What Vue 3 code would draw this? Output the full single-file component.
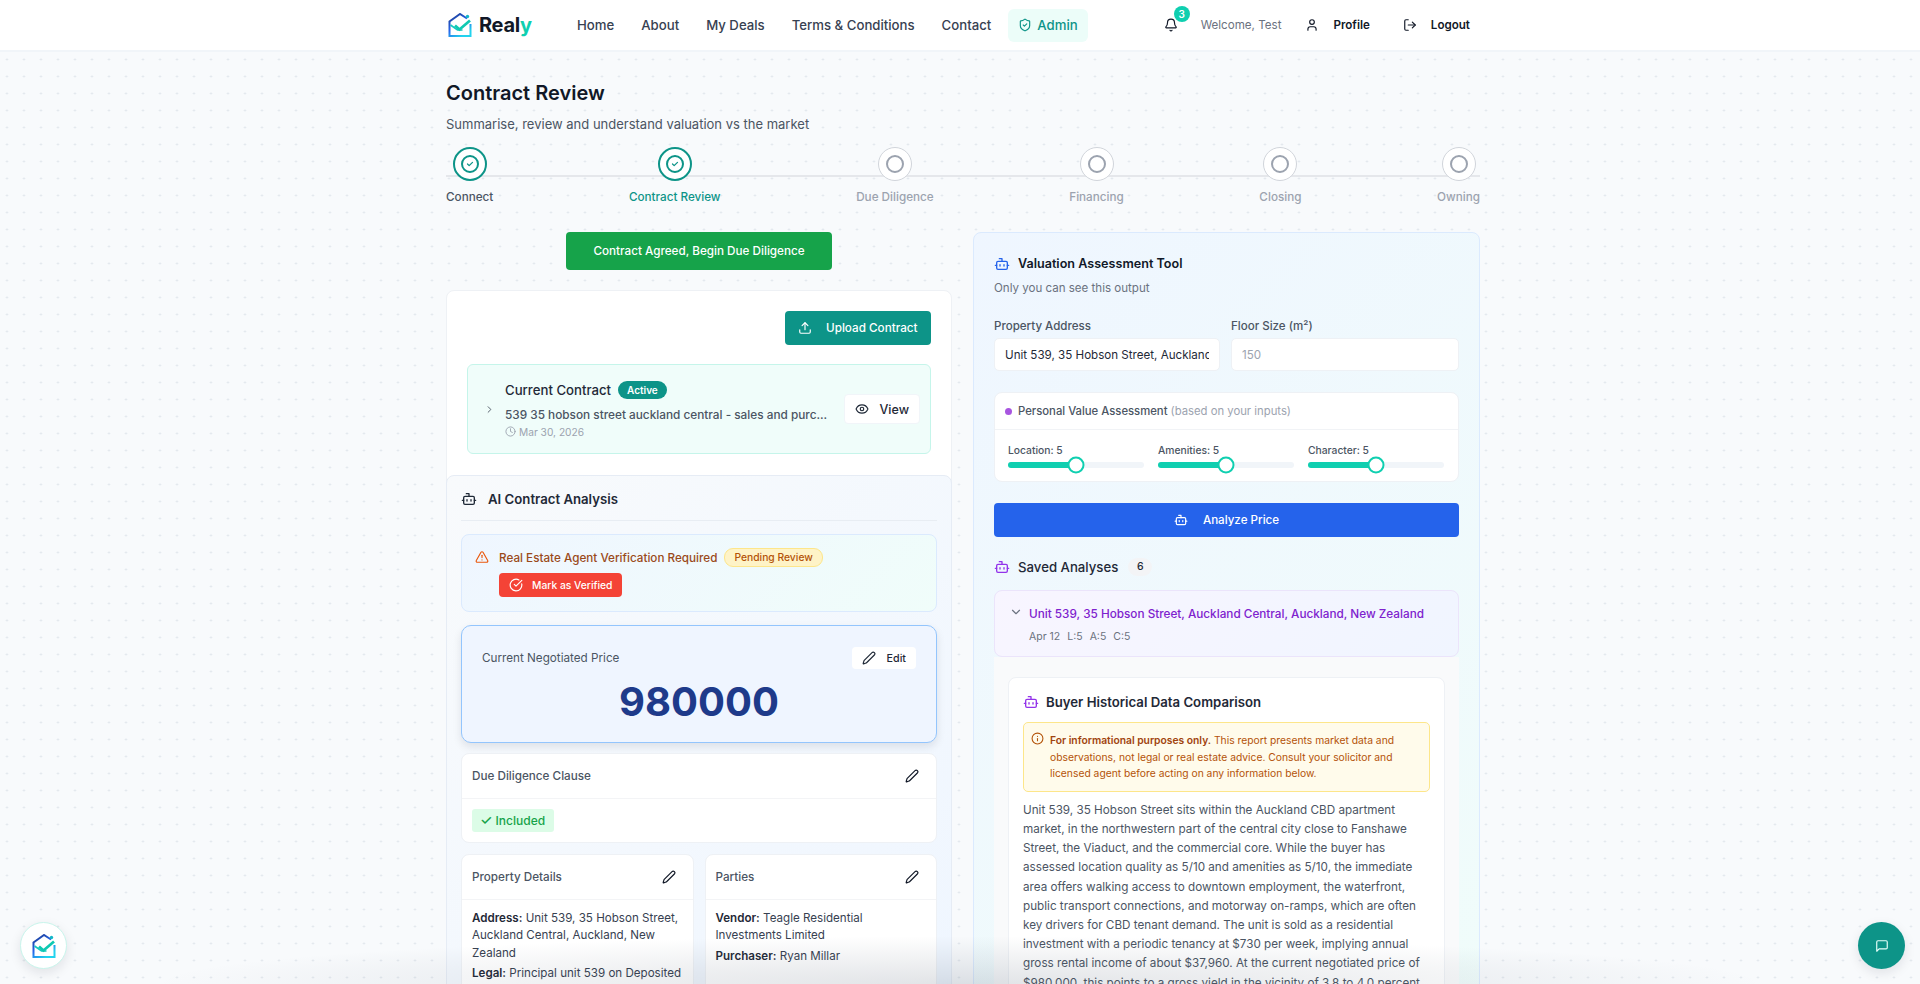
<script setup>
const icons = {
  bot: '<path d="M12 8V4H8"/><rect width="16" height="12" x="4" y="8" rx="2"/><path d="M2 14h2"/><path d="M20 14h2"/><path d="M15 13v2"/><path d="M9 13v2"/>',
  bell: '<path d="M10.268 21a2 2 0 0 0 3.464 0"/><path d="M3.262 15.326A1 1 0 0 0 4 17h16a1 1 0 0 0 .74-1.673C19.41 13.956 18 12.499 18 8A6 6 0 0 0 6 8c0 4.499-1.411 5.956-2.738 7.326"/>',
  user: '<path d="M19 21v-2a4 4 0 0 0-4-4H9a4 4 0 0 0-4 4v2"/><circle cx="12" cy="7" r="4"/>',
  logout: '<path d="M9 21H5a2 2 0 0 1-2-2V5a2 2 0 0 1 2-2h4"/><polyline points="16 17 21 12 16 7"/><line x1="21" x2="9" y1="12" y2="12"/>',
  upload: '<path d="M21 15v4a2 2 0 0 1-2 2H5a2 2 0 0 1-2-2v-4"/><polyline points="17 8 12 3 7 8"/><line x1="12" x2="12" y1="3" y2="15"/>',
  eye: '<path d="M2.062 12.348a1 1 0 0 1 0-.696 10.75 10.75 0 0 1 19.876 0 1 1 0 0 1 0 .696 10.75 10.75 0 0 1-19.876 0"/><circle cx="12" cy="12" r="3"/>',
  clock: '<circle cx="12" cy="12" r="10"/><polyline points="12 6 12 12 16 14"/>',
  right: '<path d="m9 18 6-6-6-6"/>',
  down: '<path d="m6 9 6 6 6-6"/>',
  alert: '<path d="m21.73 18-8-14a2 2 0 0 0-3.48 0l-8 14A2 2 0 0 0 4 21h16a2 2 0 0 0 1.73-3"/><path d="M12 9v4"/><path d="M12 17h.01"/>',
  check: '<path d="M21.801 10A10 10 0 1 1 17 3.335"/><path d="m9 11 3 3L22 4"/>',
  pen: '<path d="M21.174 6.812a1 1 0 0 0-3.986-3.987L3.842 16.174a2 2 0 0 0-.5.83l-1.321 4.352a.5.5 0 0 0 .623.622l4.353-1.32a2 2 0 0 0 .83-.497z"/>',
  shield: '<path d="M20 13c0 5-3.5 7.5-7.66 8.95a1 1 0 0 1-.67-.01C7.5 20.5 4 18 4 13V6a1 1 0 0 1 1-1c2 0 4.5-1.2 6.24-2.72a1.17 1.17 0 0 1 1.52 0C14.51 3.81 17 5 19 5a1 1 0 0 1 1 1z"/><path d="m9 12 2 2 4-4"/>',
  info: '<circle cx="12" cy="12" r="10"/><path d="M12 16v-4"/><path d="M12 8h.01"/>',
  message: '<path d="M21 15a2 2 0 0 1-2 2H7l-4 4V5a2 2 0 0 1 2-2h14a2 2 0 0 1 2 2z"/>',
}

const navLinks = ['Home', 'About', 'My Deals', 'Terms & Conditions', 'Contact']

const steps = [
  { label: 'Connect', state: 'done' },
  { label: 'Contract Review', state: 'now' },
  { label: 'Due Diligence', state: 'todo' },
  { label: 'Financing', state: 'todo' },
  { label: 'Closing', state: 'todo' },
  { label: 'Owning', state: 'todo' },
]

const sliders = [
  { label: 'Location', value: 5 },
  { label: 'Amenities', value: 5 },
  { label: 'Character', value: 5 },
]

const reportLines = `Unit 539, 35 Hobson Street sits within the Auckland CBD apartment market, in the northwestern part of the central city close to Fanshawe Street, the Viaduct, and the commercial core. While the buyer has assessed location quality as 5/10 and amenities as 5/10, the immediate area offers walking access to downtown employment, the waterfront, public transport connections, and motorway on-ramps, which are often key drivers for CBD tenant demand. The unit is sold as a residential investment with a periodic tenancy at $730 per week, implying annual gross rental income of about $37,960. At the current negotiated price of $980,000, this points to a gross yield in the vicinity of 3.8 to 4.0 percent.`
</script>

<template>
  <div class="page">
    <header class="navbar">
      <div class="nav-inner">
        <a class="brand">
          <svg class="logo" viewBox="0 0 24 24" fill="none">
            <defs>
              <linearGradient id="logoGrad" x1="0" y1="0" x2="0.6" y2="1">
                <stop offset="0" stop-color="#1e3a8a" />
                <stop offset="0.55" stop-color="#2563eb" />
                <stop offset="1" stop-color="#22d3ee" />
              </linearGradient>
            </defs>
            <path d="M19 5.500 12 1 1.500 8.500V23h21V11" stroke="url(#logoGrad)" stroke-width="2" />
            <path d="M2.500 12 9.500 17h5" stroke="#14c8c0" stroke-width="1.600" />
            <path d="m7 12.500 4.500 4 10.500-9" stroke="#0fc9b2" stroke-width="2.800" />
            <circle cx="19.500" cy="3.500" r="1.700" fill="#14b8c8" />
          </svg>
          <span class="brand-name">Real<span class="brand-y">y</span></span>
        </a>
        <nav class="nav-links">
          <a v-for="link in navLinks" :key="link" class="nav-link">{{ link }}</a>
          <a class="nav-link admin">
            <svg class="icon i14" viewBox="0 0 24 24" v-html="icons.shield"></svg>
            Admin
          </a>
        </nav>
        <div class="nav-right">
          <span class="bell">
            <svg class="icon i14" viewBox="0 0 24 24" v-html="icons.bell"></svg>
            <span class="bell-count">3</span>
          </span>
          <span class="welcome">Welcome, Test</span>
          <a class="nav-action">
            <svg class="icon i14" viewBox="0 0 24 24" v-html="icons.user"></svg>
            Profile
          </a>
          <a class="nav-action">
            <svg class="icon i14" viewBox="0 0 24 24" v-html="icons.logout"></svg>
            Logout
          </a>
        </div>
      </div>
    </header>

    <main class="container">
      <h1 class="page-title">Contract Review</h1>
      <p class="page-sub">Summarise, review and understand valuation vs the market</p>

      <div class="stepper">
        <div v-for="step in steps" :key="step.label" class="step" :class="step.state">
          <span class="step-dot">
            <span class="step-ring">
              <svg v-if="step.state !== 'todo'" class="icon step-check" viewBox="0 0 24 24"><path d="m6 12 4 4 8-8" /></svg>
            </span>
          </span>
          <span class="step-label">{{ step.label }}</span>
        </div>
      </div>

      <div class="columns">
        <section class="left-col">
          <div class="agree-row">
            <button class="btn-agree">Contract Agreed, Begin Due Diligence</button>
          </div>

          <div class="contract-card">
            <div class="upload-row">
              <button class="btn-upload">
                <svg class="icon i14" viewBox="0 0 24 24" v-html="icons.upload"></svg>
                Upload Contract
              </button>
            </div>
            <div class="contract-row">
              <svg class="icon chevron" viewBox="0 0 24 24" v-html="icons.right"></svg>
              <div class="contract-body">
                <div class="contract-title">
                  Current Contract
                  <span class="active-pill">Active</span>
                </div>
                <div class="contract-file">539 35 hobson street auckland central - sales and purc...</div>
                <div class="contract-date">
                  <svg class="icon i11" viewBox="0 0 24 24" v-html="icons.clock"></svg>
                  Mar 30, 2026
                </div>
              </div>
              <button class="btn-view">
                <svg class="icon i14" viewBox="0 0 24 24" v-html="icons.eye"></svg>
                View
              </button>
            </div>

            <div class="analysis">
              <div class="analysis-head">
                <svg class="icon i16" viewBox="0 0 24 24" v-html="icons.bot"></svg>
                AI Contract Analysis
              </div>

              <div class="verify">
                <svg class="icon i14 verify-icon" viewBox="0 0 24 24" v-html="icons.alert"></svg>
                <div>
                  <div class="verify-top">
                    Real Estate Agent Verification Required
                    <span class="pending">Pending Review</span>
                  </div>
                  <button class="btn-verified">
                    <svg class="icon i14" viewBox="0 0 24 24" v-html="icons.check"></svg>
                    Mark as Verified
                  </button>
                </div>
              </div>

              <div class="price-card">
                <div class="price-top">
                  <span class="price-label">Current Negotiated Price</span>
                  <button class="btn-edit">
                    <svg class="icon i14" viewBox="0 0 24 24" v-html="icons.pen"></svg>
                    Edit
                  </button>
                </div>
                <div class="price-value">980000</div>
              </div>

              <div class="info-card clause">
                <div class="info-head">
                  Due Diligence Clause
                  <svg class="icon i14 dark" viewBox="0 0 24 24" v-html="icons.pen"></svg>
                </div>
                <div class="info-body">
                  <span class="included"><span class="tick">✓</span> Included</span>
                </div>
              </div>

              <div class="two-up">
                <div class="info-card">
                  <div class="info-head">
                    Property Details
                    <svg class="icon i14 dark" viewBox="0 0 24 24" v-html="icons.pen"></svg>
                  </div>
                  <div class="info-body">
                    <p class="kv"><b>Address:</b> Unit 539, 35 Hobson Street, Auckland Central, Auckland, New Zealand</p>
                    <p class="kv"><b>Legal:</b> Principal unit 539 on Deposited Plan 201 and accessory units</p>
                  </div>
                </div>
                <div class="info-card">
                  <div class="info-head">
                    Parties
                    <svg class="icon i14 dark" viewBox="0 0 24 24" v-html="icons.pen"></svg>
                  </div>
                  <div class="info-body">
                    <p class="kv"><b>Vendor:</b> Teagle Residential Investments Limited</p>
                    <p class="kv"><b>Purchaser:</b> Ryan Millar</p>
                  </div>
                </div>
              </div>
            </div>
          </div>
        </section>

        <section class="tool-card">
          <div class="tool-title">
            <svg class="icon i16 blue" viewBox="0 0 24 24" v-html="icons.bot"></svg>
            Valuation Assessment Tool
          </div>
          <p class="tool-sub">Only you can see this output</p>

          <div class="fields">
            <label class="field">
              <span class="field-label">Property Address</span>
              <input class="field-input" value="Unit 539, 35 Hobson Street, Auckland Central, Auckland, New Zealand" readonly />
            </label>
            <label class="field">
              <span class="field-label">Floor Size (m²)</span>
              <input class="field-input" placeholder="150" readonly />
            </label>
          </div>

          <div class="assess">
            <div class="assess-head">
              <span class="assess-dot"></span>
              <span>Personal Value Assessment <span class="assess-note">(based on your inputs)</span></span>
            </div>
            <div class="assess-body">
              <div v-for="s in sliders" :key="s.label" class="slider">
                <span class="slider-label">{{ s.label }}: {{ s.value }}</span>
                <div class="track">
                  <div class="fill" :style="{ width: s.value * 10 + '%' }"></div>
                  <span class="thumb" :style="{ left: s.value * 10 + '%' }"></span>
                </div>
              </div>
            </div>
          </div>

          <button class="btn-analyze">
            <svg class="icon i14" viewBox="0 0 24 24" v-html="icons.bot"></svg>
            Analyze Price
          </button>

          <div class="saved-head">
            <svg class="icon i16 purple" viewBox="0 0 24 24" v-html="icons.bot"></svg>
            Saved Analyses
            <span class="saved-count">6</span>
          </div>

          <div class="saved-item">
            <svg class="icon i14 gray" viewBox="0 0 24 24" v-html="icons.down"></svg>
            <div>
              <div class="saved-name">Unit 539, 35 Hobson Street, Auckland Central, Auckland, New Zealand</div>
              <div class="saved-meta"><span>Apr 12</span><span>L:5</span><span>A:5</span><span>C:5</span></div>
            </div>
          </div>

          <div class="saved-panel">
            <div class="report">
              <div class="report-title">
                <svg class="icon i16 purple" viewBox="0 0 24 24" v-html="icons.bot"></svg>
                Buyer Historical Data Comparison
              </div>
              <div class="notice">
                <svg class="icon i13" viewBox="0 0 24 24" v-html="icons.info"></svg>
                <p><b>For informational purposes only.</b> This report presents market data and observations, not legal or real estate advice. Consult your solicitor and licensed agent before acting on any information below.</p>
              </div>
              <p class="report-text">{{ reportLines }}</p>
            </div>
          </div>
        </section>
      </div>
    </main>

    <div class="bottom-fade"></div>

    <button class="float-logo">
      <svg class="logo" viewBox="0 0 24 24" fill="none">
        <path d="M19 5.500 12 1 1.500 8.500V23h21V11" stroke="url(#logoGrad)" stroke-width="2" />
        <path d="M2.500 12 9.500 17h5" stroke="#14c8c0" stroke-width="1.600" />
        <path d="m7 12.500 4.500 4 10.500-9" stroke="#0fc9b2" stroke-width="2.800" />
        <circle cx="19.500" cy="3.500" r="1.700" fill="#14b8c8" />
      </svg>
    </button>
    <button class="float-chat">
      <svg class="icon i14" viewBox="0 0 24 24" v-html="icons.message"></svg>
    </button>
  </div>
</template>

<style>
body {
  margin: 0;
}
</style>

<style scoped>
* {
  box-sizing: border-box;
}

.page {
  position: relative;
  height: 100vh;
  overflow: hidden;
  font-family: Inter, "Liberation Sans", sans-serif;
  color: #111827;
  background-color: #f8fafc;
  background-image: radial-gradient(circle, #dde3ea 0.9px, transparent 1.1px);
  background-size: 17px 17px;
  background-position: -1.5px 0;
}

button {
  font-family: inherit;
  border: none;
  cursor: pointer;
}

p {
  margin: 0;
}

.icon {
  fill: none;
  stroke: currentColor;
  stroke-width: 2;
  stroke-linecap: round;
  stroke-linejoin: round;
  flex-shrink: 0;
}

.i11 { width: 11px; height: 11px; }
.i13 { width: 13px; height: 13px; }
.i14 { width: 14px; height: 14px; }
.i16 { width: 16px; height: 16px; }
.blue { color: #2563eb; }
.purple { color: #9333ea; }
.gray { color: #6b7280; }
.dark { color: #111827; }

.navbar {
  height: 52px;
  background: #fff;
  border-bottom: 2px solid #f1f5f9;
}

.nav-inner {
  width: 1034px;
  margin-left: 446px;
  height: 50px;
  display: flex;
  align-items: center;
  white-space: nowrap;
}

.brand {
  display: flex;
  align-items: center;
  gap: 7px;
  width: 131px;
  padding-left: 2px;
}

.logo {
  width: 24px;
  height: 24px;
}

.brand-name {
  font-size: 20px;
  font-weight: 700;
  color: #111827;
  letter-spacing: -0.3px;
}

.brand-y {
  color: #0fcfb0;
}

.nav-links {
  display: flex;
  align-items: center;
  gap: 27px;
}

.nav-link {
  font-size: 13.2px;
  font-weight: 500;
  color: #374151;
}

.nav-link.admin {
  display: flex;
  align-items: center;
  gap: 5px;
  height: 33px;
  margin-left: -10px;
  padding: 0 10px;
  border-radius: 6px;
  background: #ecfdf9;
  color: #0d9488;
}

.nav-right {
  display: flex;
  align-items: center;
  margin-left: 76px;
}

.bell {
  position: relative;
  display: flex;
  color: #111827;
}

.bell-count {
  position: absolute;
  top: -12px;
  right: -12px;
  width: 16px;
  height: 16px;
  border-radius: 50%;
  background: #0fcfb0;
  color: #fff;
  font-size: 10px;
  font-weight: 600;
  line-height: 16px;
  text-align: center;
}

.welcome {
  margin-left: 23px;
  font-size: 11.6px;
  color: #6b7280;
}

.nav-action {
  display: flex;
  align-items: center;
  gap: 14px;
  margin-left: 24px;
  font-size: 11.6px;
  font-weight: 600;
  color: #111827;
}

.nav-action + .nav-action {
  margin-left: 33px;
}

.container {
  width: 1034px;
  margin-left: 446px;
}

.page-title {
  margin: 29px 0 0;
  font-size: 20px;
  line-height: 24px;
  font-weight: 600;
  color: #111827;
}

.page-sub {
  margin-top: 9px;
  font-size: 13px;
  line-height: 20px;
  color: #4b5563;
}

.stepper {
  position: relative;
  display: flex;
  justify-content: space-between;
  margin-top: 13px;
}

.stepper::before {
  content: "";
  position: absolute;
  left: 0;
  right: 0;
  top: 28px;
  height: 2px;
  background: #e5e7eb;
}

.step {
  position: relative;
  display: flex;
  flex-direction: column;
  align-items: center;
  gap: 8px;
}

.step-dot {
  width: 34px;
  height: 34px;
  border-radius: 50%;
  display: flex;
  align-items: center;
  justify-content: center;
  background: #fff;
  border: 1.5px solid #d1d5db;
}

.step.done .step-dot,
.step.now .step-dot {
  border: 2px solid #0d9488;
}

.step-ring {
  width: 18px;
  height: 18px;
  border-radius: 50%;
  border: 2px solid #9ca3af;
  display: flex;
  align-items: center;
  justify-content: center;
}

.step.done .step-ring,
.step.now .step-ring {
  border-color: #0d9488;
}

.step-check {
  width: 10px;
  height: 10px;
  color: #0d9488;
  stroke-width: 3;
}

.step-label {
  font-size: 11.7px;
  line-height: 16px;
  font-weight: 500;
  color: #9ca3af;
}

.step.done .step-label {
  color: #4b5563;
}

.step.now .step-label {
  color: #0d9488;
}

.columns {
  display: grid;
  grid-template-columns: 506px 507px;
  gap: 21px;
  margin-top: 27px;
  align-items: start;
}

.agree-row {
  display: flex;
  justify-content: center;
}

.btn-agree {
  width: 266px;
  height: 38px;
  border-radius: 4px;
  background: #16a34a;
  color: #fff;
  font-size: 11.7px;
  font-weight: 500;
}

.contract-card {
  margin-top: 20px;
  background: #fff;
  border: 1px solid #eef1f5;
  border-radius: 8px;
  padding-top: 20px;
}

.upload-row {
  display: flex;
  justify-content: flex-end;
  padding-right: 20px;
}

.btn-upload {
  display: flex;
  align-items: center;
  gap: 14px;
  height: 34px;
  padding: 0 13.5px;
  border-radius: 4px;
  background: #0d9488;
  color: #fff;
  font-size: 11.7px;
  font-weight: 500;
}

.contract-row {
  display: flex;
  align-items: center;
  margin: 19px 20px 0;
  height: 90px;
  padding: 0 10px 0 16px;
  background: #f0fdfa;
  border: 1px solid #c5f5ea;
  border-radius: 6px;
}

.chevron {
  width: 11px;
  height: 11px;
  color: #4b5563;
}

.contract-body {
  flex: 1;
  min-width: 0;
  margin-left: 10px;
}

.contract-title {
  display: flex;
  align-items: center;
  gap: 7px;
  font-size: 13.2px;
  font-weight: 500;
  color: #1f2937;
}

.active-pill {
  padding: 0 9px;
  line-height: 18px;
  border-radius: 9px;
  background: #0d9488;
  color: #fff;
  font-size: 10px;
  font-weight: 600;
}

.contract-file {
  margin-top: 9px;
  font-size: 11.8px;
  color: #4b5563;
  font-weight: 500;
}

.contract-date {
  display: flex;
  align-items: center;
  gap: 3px;
  margin-top: 4px;
  font-size: 10.2px;
  color: #9ca3af;
}

.btn-view {
  display: flex;
  align-items: center;
  gap: 10px;
  height: 30px;
  padding: 0 10px;
  background: #fff;
  border: 1px solid #f1f5f9;
  border-radius: 4px;
  font-size: 12.5px;
  font-weight: 500;
  color: #1f2937;
}

.analysis {
  margin: 21px -1px 0;
  padding: 0 14px;
  border: 1px solid #e6ecf5;
  border-radius: 8px;
  background: linear-gradient(135deg, #f8fafc, #eff6ff);
}

.analysis-head {
  display: flex;
  align-items: center;
  gap: 11px;
  height: 45px;
  padding-top: 1px;
  border-bottom: 1px solid #e8edf3;
  font-size: 13.2px;
  font-weight: 600;
  color: #1f2937;
}

.verify {
  display: flex;
  gap: 10px;
  margin-top: 13px;
  padding: 13px 13px;
  height: 78px;
  border: 1px solid #dbeafe;
  border-radius: 8px;
  background: linear-gradient(135deg, #eff6ff, #f0fdfa);
}

.verify-icon {
  margin-top: 2px;
  color: #ea580c;
}

.verify-top {
  display: flex;
  align-items: center;
  gap: 7px;
  font-size: 11.7px;
  font-weight: 500;
  color: #9a4a1a;
}

.pending {
  padding: 0 9px;
  line-height: 17px;
  border-radius: 9px;
  background: #fef3c7;
  border: 1px solid #fde68a;
  color: #b45309;
  font-size: 10.3px;
  font-weight: 500;
}

.btn-verified {
  display: flex;
  align-items: center;
  gap: 9px;
  height: 24px;
  margin-top: 6px;
  padding: 0 10px;
  border-radius: 4px;
  background: #f44336;
  color: #fff;
  font-size: 10.3px;
  font-weight: 500;
}

.price-card {
  margin-top: 13px;
  height: 118px;
  padding: 21px 20px 0;
  border: 1.5px solid #93c5fd;
  border-radius: 10px;
  background: #eff5ff;
  box-shadow: 0 4px 8px rgba(15, 23, 42, 0.1);
}

.price-top {
  display: flex;
  align-items: center;
  justify-content: space-between;
}

.price-label {
  font-size: 11.7px;
  color: #4b5563;
}

.btn-edit {
  display: flex;
  align-items: center;
  gap: 11px;
  height: 22px;
  padding: 0 10px;
  border-radius: 4px;
  background: #fff;
  font-size: 10.7px;
  font-weight: 500;
  color: #1f2937;
}

.price-value {
  margin-top: 9px;
  text-align: center;
  font-size: 40px;
  line-height: 48px;
  font-weight: 700;
  color: #1e3a8a;
}

.info-card {
  margin-top: 11px;
  background: #fff;
  border: 1px solid #eef1f5;
  border-radius: 8px;
}

.info-card.clause {
  margin-top: 10px;
}

.info-head {
  display: flex;
  align-items: center;
  justify-content: space-between;
  height: 45px;
  padding: 0 17px 0 10px;
  border-bottom: 1px solid #f3f4f6;
  font-size: 11.7px;
  font-weight: 500;
  color: #4b5563;
}

.info-body {
  padding: 10px;
}

.included {
  display: inline-block;
  padding: 0 9px 0 8px;
  line-height: 23px;
  border-radius: 3px;
  background: #dcfce7;
  color: #16a34a;
  font-size: 12px;
  font-weight: 500;
}

.tick {
  font-size: 14px;
  line-height: 1;
}

.two-up {
  display: grid;
  grid-template-columns: 1fr 1fr;
  gap: 11px;
}

.kv {
  font-size: 11.6px;
  line-height: 17.3px;
  color: #374151;
}

.kv + .kv {
  margin-top: 3px;
}

.kv b {
  font-weight: 600;
  color: #1f2937;
}

.tool-card {
  height: 900px;
  padding: 21px 20px 0;
  border: 1px solid #dbeafe;
  border-radius: 8px;
  background: linear-gradient(135deg, #eff6ff, #f0fdfa);
}

.tool-title {
  display: flex;
  align-items: center;
  gap: 8px;
  font-size: 12.6px;
  line-height: 20px;
  font-weight: 600;
  color: #111827;
}

.tool-sub {
  margin-top: 5px;
  font-size: 11.55px;
  line-height: 18px;
  color: #6b7280;
}

.fields {
  display: grid;
  grid-template-columns: 226px 1fr;
  gap: 11px;
  margin-top: 21px;
}

.field {
  display: flex;
  flex-direction: column;
  gap: 4px;
}

.field-label {
  font-size: 11.55px;
  line-height: 16px;
  font-weight: 500;
  color: #4b5563;
}

.field-input {
  width: 100%;
  height: 33px;
  padding: 0 10px;
  background: #fff;
  border: 1px solid #eef1f5;
  border-radius: 5px;
  font-family: inherit;
  font-size: 11.6px;
  color: #1f2937;
  outline: none;
}

.field-input::placeholder {
  color: #9ca3af;
}

.assess {
  margin-top: 21px;
  height: 90px;
  background: #fff;
  border: 1px solid #eef1f5;
  border-radius: 8px;
}

.assess-head {
  display: flex;
  align-items: center;
  gap: 6px;
  height: 37px;
  padding: 0 10px;
  border-bottom: 1px solid #f1f3f6;
  font-size: 11.3px;
  font-weight: 500;
  color: #4b5563;
}

.assess-dot {
  width: 7px;
  height: 7px;
  border-radius: 50%;
  background: #a855e0;
}

.assess-note {
  font-weight: 400;
  color: #9ca3af;
}

.assess-body {
  display: grid;
  grid-template-columns: repeat(3, 136px);
  gap: 14px;
  padding: 13px 14px 0 13px;
}

.slider-label {
  display: block;
  font-size: 10.3px;
  line-height: 14px;
  font-weight: 500;
  color: #4b5563;
}

.track {
  position: relative;
  height: 6px;
  margin-top: 5px;
  border-radius: 3px;
  background: #f1f5f9;
}

.fill {
  height: 100%;
  border-radius: 3px;
  background: #0fcfb0;
}

.thumb {
  position: absolute;
  top: 50%;
  width: 17px;
  height: 17px;
  transform: translate(-50%, -50%);
  border-radius: 50%;
  background: #fff;
  border: 2px solid #0fcfb0;
}

.btn-analyze {
  display: flex;
  align-items: center;
  justify-content: center;
  gap: 15px;
  width: 100%;
  height: 34px;
  margin-top: 21px;
  border-radius: 4px;
  background: #2563eb;
  color: #fff;
  font-size: 11.6px;
  font-weight: 500;
}

.saved-head {
  display: flex;
  align-items: center;
  gap: 8px;
  margin-top: 20px;
  font-size: 13.2px;
  line-height: 20px;
  font-weight: 500;
  color: #1f2937;
}

.saved-count {
  margin-left: 2px;
  width: 24px;
  line-height: 18px;
  border-radius: 9px;
  background: #f3f4f6;
  text-align: center;
  font-size: 10.5px;
  font-weight: 500;
}

.saved-item {
  display: flex;
  gap: 6px;
  margin-top: 13px;
  height: 67px;
  padding: 14px 14px 0 14px;
  background: linear-gradient(135deg, #f8f5ff, #f0f5ff);
  border: 1px solid #ebe4fb;
  border-radius: 8px;
}

.saved-name {
  font-size: 11.75px;
  line-height: 18px;
  font-weight: 500;
  color: #7e22ce;
}

.saved-meta {
  display: flex;
  gap: 7px;
  margin-top: 7px;
  font-size: 10.5px;
  line-height: 14px;
  color: #6b7280;
}

.saved-panel {
  height: 400px;
  padding: 20px 14px 0;
  background: #f9fafb;
  border-radius: 0 0 8px 8px;
}

.report {
  height: 100%;
  padding: 14px;
  background: #fff;
  border: 1px solid #eef1f5;
  border-radius: 8px;
}

.report-title {
  display: flex;
  align-items: center;
  gap: 7px;
  font-size: 13.2px;
  line-height: 20px;
  font-weight: 600;
  color: #1f2937;
}

.notice {
  display: flex;
  gap: 6px;
  margin-top: 10px;
  padding: 9px 7px;
  background: #fffbeb;
  border: 1px solid #fde68a;
  border-radius: 5px;
  font-size: 10.3px;
  line-height: 16.6px;
  color: #b45309;
}

.notice b {
  font-weight: 600;
  color: #a1440f;
}

.report-text {
  margin-top: 9px;
  font-size: 11.7px;
  line-height: 19.2px;
  color: #4b5563;
}

.bottom-fade {
  position: absolute;
  left: 0;
  right: 0;
  bottom: 0;
  height: 48px;
  pointer-events: none;
  background: radial-gradient(ellipse 42% 100% at 50% 100%, rgba(71, 85, 105, 0.16), rgba(71, 85, 105, 0));
}

.float-logo,
.float-chat {
  position: absolute;
  bottom: 15px;
  width: 47px;
  height: 47px;
  border-radius: 50%;
  display: flex;
  align-items: center;
  justify-content: center;
  padding: 0;
}

.float-logo {
  left: 20px;
  background: #fff;
  border: 1px solid #c9f5ec;
  box-shadow: 0 4px 12px rgba(15, 23, 42, 0.1);
}

.float-chat {
  right: 15px;
  background: #0d9488;
  color: #e6fffa;
  box-shadow: 0 4px 12px rgba(15, 23, 42, 0.1);
}
</style>
